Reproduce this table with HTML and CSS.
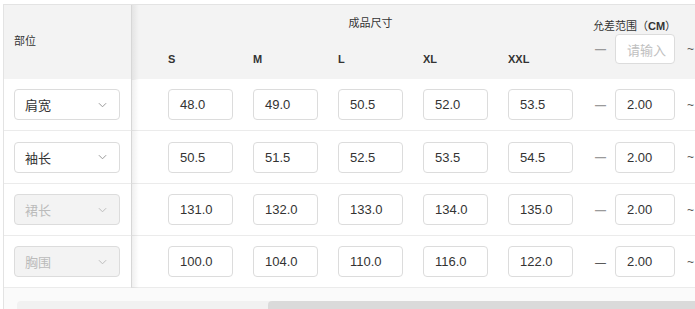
FILE: index.html
```html
<!DOCTYPE html>
<html lang="zh">
<head>
<meta charset="utf-8">
<link rel="stylesheet" href="styles.css">
</head>
<body>
<div class="frame">
  <div class="table">
    <div class="thead">
      <div class="fixed head-fixed"><span class="head-label">部位</span></div>
      <div class="head-sizes">
        <div class="group-title">成品尺寸</div>
        <div class="size-labels">
          <span>S</span><span>M</span><span>L</span><span>XL</span><span>XXL</span>
        </div>
      </div>
      <div class="head-tol">
        <div class="tol-title">允差范围（<b>CM</b>）</div>
        <div class="tol-row">
          <span class="dash gray">—</span>
          <div class="inp tol-inp placeholder">请输入</div>
          <span class="tilde">~</span>
        </div>
      </div>
    </div>

    <div class="row">
      <div class="fixed"><div class="select"><span>肩宽</span><svg class="chev" viewBox="0 0 10 6" width="9" height="6"><path d="M1 1l4 4 4-4" fill="none" stroke="#999" stroke-width="1.1"/></svg></div></div>
      <div class="sizes">
        <div class="inp">48.0</div><div class="inp">49.0</div><div class="inp">50.5</div><div class="inp">52.0</div><div class="inp">53.5</div>
      </div>
      <div class="tol"><span class="dash gray">—</span><div class="inp tol-inp">2.00</div><span class="tilde">~</span></div>
    </div>

    <div class="row">
      <div class="fixed"><div class="select"><span>袖长</span><svg class="chev" viewBox="0 0 10 6" width="9" height="6"><path d="M1 1l4 4 4-4" fill="none" stroke="#999" stroke-width="1.1"/></svg></div></div>
      <div class="sizes">
        <div class="inp">50.5</div><div class="inp">51.5</div><div class="inp">52.5</div><div class="inp">53.5</div><div class="inp">54.5</div>
      </div>
      <div class="tol"><span class="dash gray">—</span><div class="inp tol-inp">2.00</div><span class="tilde">~</span></div>
    </div>

    <div class="row">
      <div class="fixed"><div class="select disabled"><span>裙长</span><svg class="chev" viewBox="0 0 10 6" width="9" height="6"><path d="M1 1l4 4 4-4" fill="none" stroke="#bbb" stroke-width="1.1"/></svg></div></div>
      <div class="sizes">
        <div class="inp">131.0</div><div class="inp">132.0</div><div class="inp">133.0</div><div class="inp">134.0</div><div class="inp">135.0</div>
      </div>
      <div class="tol"><span class="dash gray">—</span><div class="inp tol-inp">2.00</div><span class="tilde">~</span></div>
    </div>

    <div class="row">
      <div class="fixed"><div class="select disabled"><span>胸围</span><svg class="chev" viewBox="0 0 10 6" width="9" height="6"><path d="M1 1l4 4 4-4" fill="none" stroke="#bbb" stroke-width="1.1"/></svg></div></div>
      <div class="sizes">
        <div class="inp">100.0</div><div class="inp">104.0</div><div class="inp">110.0</div><div class="inp">116.0</div><div class="inp">122.0</div>
      </div>
      <div class="tol"><span class="dash dark">—</span><div class="inp tol-inp">2.00</div><span class="tilde">~</span></div>
    </div>
  </div>
  <div class="scroll-area">
    <div class="track"><div class="thumb"></div></div>
  </div>
</div>
</body>
</html>
```

FILE: styles.css
```css
html, body {
  margin: 0;
  padding: 0;
  background: #fff;
  overflow: hidden;
}
body {
  width: 695px;
  height: 309px;
  font-family: "Liberation Sans", "Noto Sans CJK SC", sans-serif;
  color: #333;
  font-size: 13px;
}
.frame {
  margin: 4px 0 0 3px;
  border-top: 1px solid #e3e3e3;
  border-left: 1px solid #e3e3e3;
  height: 305px;
  box-sizing: border-box;
  width: 800px;
  display: flex;
  flex-direction: column;
}
.table {
  display: flex;
  flex-direction: column;
}
.thead {
  display: flex;
  height: 74px;
  background: #f3f3f3;
}
.fixed {
  position: relative;
  width: 128px;
  flex: none;
  box-sizing: border-box;
  padding-left: 10px;
  display: flex;
  align-items: center;
  border-right: 1px solid #e6e6e6;
}
.fixed::after {
  content: "";
  position: absolute;
  top: 0;
  bottom: -1px;
  left: 100%;
  width: 8px;
  background: linear-gradient(to right, rgba(0,0,0,0.07), rgba(0,0,0,0));
}
.head-fixed {
  font-size: 11px;
  padding-bottom: 4px;
}
.head-sizes {
  padding-left: 36px;
  width: 405px;
  flex: none;
  display: flex;
  flex-direction: column;
}
.group-title {
  font-size: 11px;
  text-align: center;
  margin-top: 10px;
  line-height: 16px;
}
.size-labels {
  display: flex;
  gap: 20px;
  margin-top: 20px;
  font-size: 11px;
  font-weight: bold;
  line-height: 16px;
}
.size-labels span {
  width: 65px;
}
.head-tol {
  margin-left: 22px;
  display: flex;
  flex-direction: column;
}
.tol-title {
  font-size: 11px;
  margin-top: 13px;
  line-height: 16px;
  margin-left: -2px;
}
.tol-title b {
  font-weight: bold;
}
.tol-row {
  display: flex;
  align-items: center;
  margin-top: 0;
}
.row {
  display: flex;
  height: 52px;
  box-sizing: border-box;
  border-bottom: 1px solid #ebebeb;
  background: #fff;
}
.row:nth-child(3) {
  height: 53px;
}
.select {
  width: 106px;
  height: 31px;
  box-sizing: border-box;
  border: 1px solid #dcdcdc;
  border-radius: 4px;
  background: #fff;
  display: flex;
  align-items: center;
  justify-content: space-between;
  padding: 0 12px 0 10px;
  font-size: 13px;
  color: #333;
}
.select.disabled {
  background: #f3f3f3;
  color: #bbb;
}
.chev {
  display: block;
}
.sizes {
  padding-left: 36px;
  display: flex;
  gap: 20px;
  align-items: center;
  width: 405px;
  flex: none;
}
.inp {
  width: 65px;
  height: 31px;
  box-sizing: border-box;
  border: 1px solid #dcdcdc;
  border-radius: 4px;
  background: #fff;
  padding-left: 11px;
  display: flex;
  align-items: center;
  font-size: 13px;
  color: #333;
  flex: none;
}
.tol {
  margin-left: 22px;
  display: flex;
  align-items: center;
}
.dash {
  width: 11px;
  margin-right: 9px;
  font-size: 11px;
  font-weight: bold;
  line-height: 14px;
}
.dash.gray {
  color: #9a9a9a;
}
.dash.dark {
  color: #333;
  font-weight: normal;
}
.tol-inp {
  width: 60px;
}
.head-tol .tol-inp {
  height: 30px;
}
.placeholder {
  color: #c0c0c0;
}
.tilde {
  margin-left: 12px;
  font-size: 12px;
  color: #555;
}
.scroll-area {
  flex: 1;
  background: #fafafa;
  display: flex;
  align-items: flex-end;
  padding-left: 13px;
}
.track {
  height: 8px;
  flex: 1;
  background: #f1f1f1;
  border-radius: 4px 0 0 0;
  position: relative;
  display: flex;
  justify-content: flex-end;
}
.thumb {
  width: 535px;
  height: 8px;
  background: #dadada;
  border-radius: 4px 0 0 0;
}
```
